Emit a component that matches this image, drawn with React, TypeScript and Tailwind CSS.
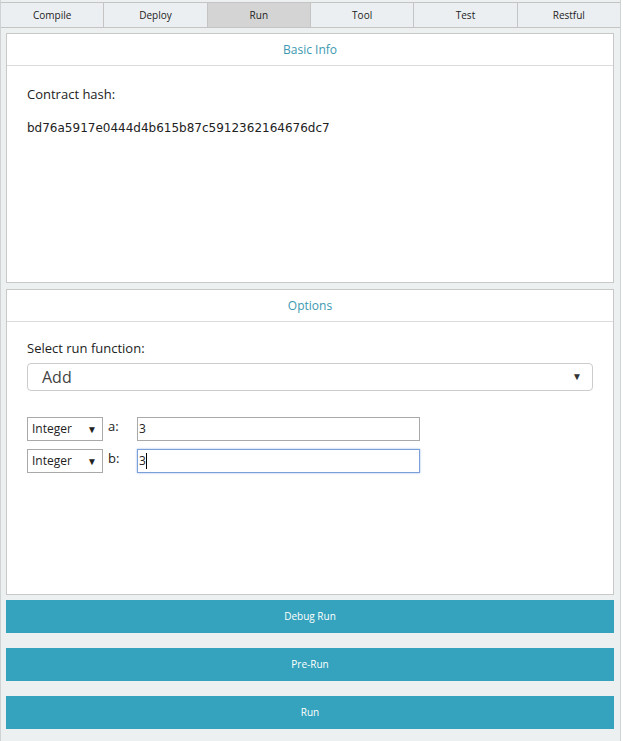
const tabs = ['Compile', 'Deploy', 'Run', 'Tool', 'Test', 'Restful'];

function PanelHeader({ title }: { title: string }) {
  return (
    <div className="h-[32px] flex items-center justify-center border-b border-[#dcdcdc] text-[12px] text-[#3c98b0]">
      {title}
    </div>
  );
}

function ParamRow({ name, value, focused }: { name: string; value: string; focused?: boolean }) {
  return (
    <div className="flex items-start">
      <div className="relative w-[76px] h-[24px] border border-[#a9a9a9] bg-white flex items-center pl-[4px] text-[12px] text-[#222]">
        Integer
        <span className="absolute right-[5px] top-[4px] text-[10px]">▼</span>
      </div>
      <div className="w-[34px] pl-[5px] text-[13px] text-[#222]">{name}:</div>
      <div
        className={
          focused
            ? 'w-[283px] h-[24px] border border-[#7b9fd9] shadow-[0_0_2px_#9ab8e6] bg-white flex items-center pl-[1px] text-[12px] text-[#222]'
            : 'w-[283px] h-[24px] border border-[#a9a9a9] bg-white flex items-center pl-[1px] text-[12px] text-[#222]'
        }
      >
        {value}
        {focused && <span className="w-[1px] h-[16px] bg-black" />}
      </div>
    </div>
  );
}

export default function App() {
  return (
    <div className="w-[621px] min-h-[741px] bg-[#edf0f1] border-x border-[#cfd3d4] font-['Open_Sans',sans-serif]">
      <div className="flex h-[28px] pt-[2px]">
        {tabs.map((t, i) => (
          <div
            key={t}
            className={
              (t === 'Run' ? 'bg-[#d4d4d4] ' : 'bg-[#eceff1] ') +
              (i === 0 ? '' : 'border-l ') +
              'flex-1 border-[#c4c4c4] border-y flex items-center justify-center text-[10px] text-[#222]'
            }
          >
            {t}
          </div>
        ))}
      </div>

      <div className="pl-[5px] pr-[6px] pt-[5px] flex flex-col">
        <div className="h-[250px] bg-white border border-[#c8c8c8]">
          <PanelHeader title="Basic Info" />
          <div className="px-[20px] pt-[19px] text-[13px] text-[#222]">
            <div>Contract hash:</div>
            <div className="mt-[14px] font-['DejaVu_Sans',sans-serif] text-[12px]">
              bd76a5917e0444d4b615b87c5912362164676dc7
            </div>
          </div>
        </div>

        <div className="mt-[6px] h-[306px] bg-white border border-[#c8c8c8]">
          <PanelHeader title="Options" />
          <div className="px-[20px] pt-[17px]">
            <div className="text-[13px] text-[#222]">Select run function:</div>
            <div className="relative mt-[4px] h-[28px] border border-[#cccccc] rounded-[4px] flex items-center pl-[14px] text-[16px] text-[#444]">
              Add
              <span className="absolute right-[10px] top-[5px] text-[10px] text-[#333]">▼</span>
            </div>
            <div className="mt-[26px] flex flex-col gap-[8px]">
              <ParamRow name="a" value="3" />
              <ParamRow name="b" value="3" focused />
            </div>
          </div>
        </div>

        <div className="mt-[5px] flex flex-col gap-[15px]">
          {['Debug Run', 'Pre-Run', 'Run'].map((b) => (
            <div
              key={b}
              className="h-[33px] bg-[#35a3bd] flex items-center justify-center text-[10px] font-medium text-white"
            >
              {b}
            </div>
          ))}
        </div>
      </div>
    </div>
  );
}
